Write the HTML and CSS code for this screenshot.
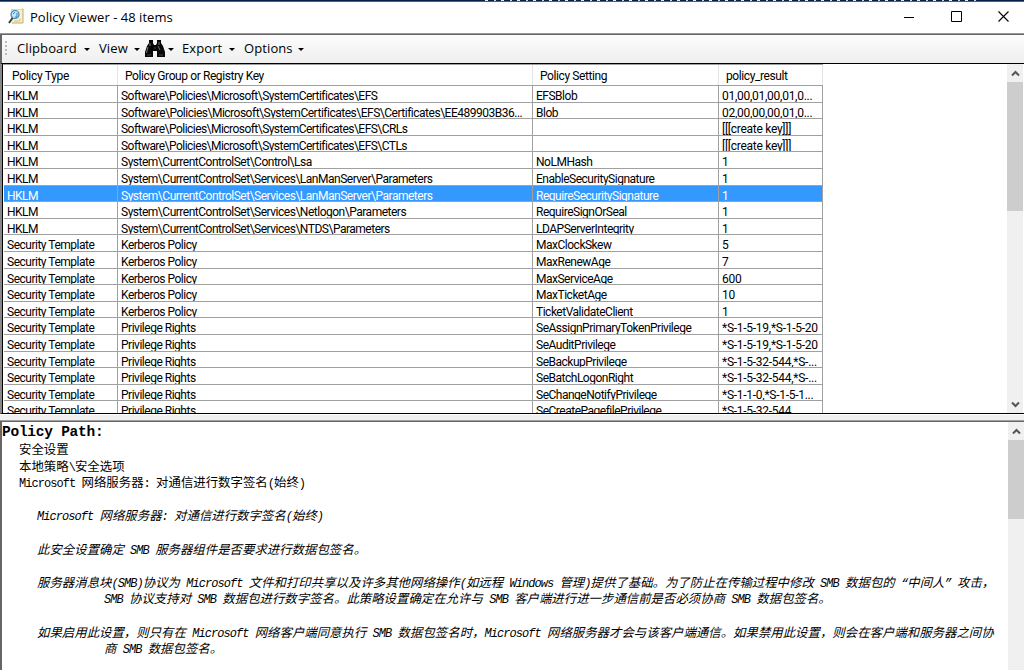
FILE: index.html
```
<!DOCTYPE html>
<html lang="zh-CN">
<head>
<meta charset="utf-8">
<title>Policy Viewer</title>
<link rel="stylesheet" href="styles.css">
</head>
<body>
<div class="window">
  <div class="desktop-edge"></div>
  <header class="titlebar">
    <svg class="app-icon" width="16" height="17" viewBox="0 0 16 17">
      <path d="M3 1h12v14H4V1z" fill="#f7f0cd"/><path d="M14 1h1v14H4" fill="none" stroke="#c3ad65"/>
      <path d="M3.5 1v10M3 1.5h11" stroke="#ded7b5"/><path d="M11 11l2 1M6 13h6" stroke="#d4c57d"/>
      <circle cx="7" cy="6.5" r="4" fill="#bde5fb" stroke="#4d83a6" stroke-width="1.2"/>
      <path d="M5 6l2-2M9 5v4M7 9h2" stroke="#268bd0"/>
      <path d="M4.5 10L1 15" stroke="#333b45" stroke-width="2"/>
    </svg>
    <h1 class="title">Policy Viewer - 48 items</h1>
    <div class="controls">
      <svg width="11" height="12" viewBox="0 0 11 12"><path d="M0 6.5h10" stroke="#000"/></svg>
      <svg width="11" height="12" viewBox="0 0 11 12"><path d="M.5.5h10v10H.5z" fill="none" stroke="#000"/></svg>
      <svg width="11" height="12" viewBox="0 0 11 12"><path d="M.5 0.5l10 10M10.5.5l-10 10" stroke="#000" stroke-width="1.1"/></svg>
    </div>
  </header>
  <main class="client">
    <nav class="toolbar">
      <span class="grip"><i></i><i></i><i></i><i></i></span>
      <span class="menu clip">Clipboard</span><b class="caret"></b>
      <span class="menu view">View</span><b class="caret"></b>
      <svg class="binoculars" width="22" height="19" viewBox="0 0 22 19">
        <path d="M5 1h4v3l1 2h2l1-2V1h4v3l2 3 2 6v5h-8v-6H9v6H1v-5l2-6 2-3z" fill="#080808"/>
        <path d="M4 8L2.5 14M14 7l2 4M6 4v3M15 3v3" stroke="#777" fill="none"/><path d="M3 16h4M15 16h4M10 9h2" stroke="#444"/>
      </svg><b class="caret tight"></b>
      <span class="menu export">Export</span><b class="caret"></b>
      <span class="menu options">Options</span><b class="caret"></b>
    </nav>
    <section class="grid-pane">
      <div class="grid">
        <div class="row head"><span>Policy Type</span><span>Policy Group or Registry Key</span><span>Policy Setting</span><span>policy_result</span></div>
        <div class="row"><span>HKLM</span><span class="sw">Software\Policies\Microsoft\SystemCertificates\EFS</span><span>EFSBlob</span><span>01,00,01,00,01,0...</span></div>
        <div class="row"><span>HKLM</span><span class="sw long">Software\Policies\Microsoft\SystemCertificates\EFS\Certificates\EE489903B36...</span><span>Blob</span><span>02,00,00,00,01,0...</span></div>
        <div class="row"><span>HKLM</span><span class="sw">Software\Policies\Microsoft\SystemCertificates\EFS\CRLs</span><span></span><span>[[[create key]]]</span></div>
        <div class="row"><span>HKLM</span><span class="sw">Software\Policies\Microsoft\SystemCertificates\EFS\CTLs</span><span></span><span>[[[create key]]]</span></div>
        <div class="row"><span>HKLM</span><span>System\CurrentControlSet\Control\Lsa</span><span>NoLMHash</span><span>1</span></div>
        <div class="row"><span>HKLM</span><span>System\CurrentControlSet\Services\LanManServer\Parameters</span><span>EnableSecuritySignature</span><span>1</span></div>
        <div class="row selected"><span>HKLM</span><span>System\CurrentControlSet\Services\LanManServer\Parameters</span><span>RequireSecuritySignature</span><span>1</span></div>
        <div class="row"><span>HKLM</span><span>System\CurrentControlSet\Services\Netlogon\Parameters</span><span>RequireSignOrSeal</span><span>1</span></div>
        <div class="row"><span>HKLM</span><span>System\CurrentControlSet\Services\NTDS\Parameters</span><span>LDAPServerIntegrity</span><span>1</span></div>
        <div class="row"><span>Security Template</span><span>Kerberos Policy</span><span>MaxClockSkew</span><span>5</span></div>
        <div class="row"><span>Security Template</span><span>Kerberos Policy</span><span>MaxRenewAge</span><span>7</span></div>
        <div class="row"><span>Security Template</span><span>Kerberos Policy</span><span>MaxServiceAge</span><span>600</span></div>
        <div class="row"><span>Security Template</span><span>Kerberos Policy</span><span>MaxTicketAge</span><span>10</span></div>
        <div class="row"><span>Security Template</span><span>Kerberos Policy</span><span>TicketValidateClient</span><span>1</span></div>
        <div class="row"><span>Security Template</span><span>Privilege Rights</span><span>SeAssignPrimaryTokenPrivilege</span><span>*S-1-5-19,*S-1-5-20</span></div>
        <div class="row"><span>Security Template</span><span>Privilege Rights</span><span>SeAuditPrivilege</span><span>*S-1-5-19,*S-1-5-20</span></div>
        <div class="row"><span>Security Template</span><span>Privilege Rights</span><span>SeBackupPrivilege</span><span>*S-1-5-32-544,*S-...</span></div>
        <div class="row"><span>Security Template</span><span>Privilege Rights</span><span>SeBatchLogonRight</span><span>*S-1-5-32-544,*S-...</span></div>
        <div class="row"><span>Security Template</span><span>Privilege Rights</span><span>SeChangeNotifyPrivilege</span><span>*S-1-1-0,*S-1-5-1...</span></div>
        <div class="row"><span>Security Template</span><span>Privilege Rights</span><span>SeCreatePagefilePrivilege</span><span>*S-1-5-32-544</span></div>
      </div>
      <div class="scrollbar">
        <svg class="arrow" width="9" height="7" viewBox="0 0 9 7"><path d="M1 5.5l3.5-3.5L8 5.5" fill="none" stroke="#555" stroke-width="2"/></svg>
        <div class="thumb"></div>
        <svg class="arrow down" width="9" height="7" viewBox="0 0 9 7"><path d="M1 1.5L4.5 5 8 1.5" fill="none" stroke="#555" stroke-width="2"/></svg>
      </div>
    </section>
    <div class="splitter"></div>
    <section class="detail-pane">
      <article class="detail">
        <h2>Policy Path:</h2>
        <p class="path">安全设置</p>
        <p class="path">本地策略<i>\</i>安全选项</p>
        <p class="path"><i>Microsoft </i>网络服务器<i>: </i>对通信进行数字签名<i>(</i>始终<i>)</i></p>
        <p></p>
        <p class="body"><i>Microsoft </i>网络服务器<i>: </i>对通信进行数字签名<i>(</i>始终<i>)</i></p>
        <p></p>
        <p class="body">此安全设置确定<i> SMB </i>服务器组件是否要求进行数据包签名。</p>
        <p></p>
        <p class="body">服务器消息块<i>(SMB)</i>协议为<i> Microsoft </i>文件和打印共享以及许多其他网络操作<i>(</i>如远程<i> Windows </i>管理<i>)</i>提供了基础。为了防止在传输过程中修改<i> SMB </i>数据包的<i> “</i>中间人<i>” </i>攻击，</p>
        <p class="body hang"><i>SMB </i>协议支持对<i> SMB </i>数据包进行数字签名。此策略设置确定在允许与<i> SMB </i>客户端进行进一步通信前是否必须协商<i> SMB </i>数据包签名。</p>
        <p></p>
        <p class="body">如果启用此设置，则只有在<i> Microsoft </i>网络客户端同意执行<i> SMB </i>数据包签名时，<i>Microsoft </i>网络服务器才会与该客户端通信。如果禁用此设置，则会在客户端和服务器之间协</p>
        <p class="body hang">商<i> SMB </i>数据包签名。</p>
      </article>
      <div class="scrollbar lower">
        <svg class="arrow" width="9" height="7" viewBox="0 0 9 7"><path d="M1 5.5l3.5-3.5L8 5.5" fill="none" stroke="#555" stroke-width="2"/></svg>
        <div class="thumb"></div>
      </div>
    </section>
  </main>
</div>
</body>
</html>
```
FILE: styles.css
```
* { box-sizing: border-box; }
body { margin: 0; background: #fff; color: #000; }
.window { width: 1024px; height: 670px; display: flex; flex-direction: column; overflow: hidden; }
.desktop-edge { height: 2px; flex: none; border-bottom: 1px solid #1a70b8; background: repeating-linear-gradient(90deg, #06204c 0 5px, #e7ebf0 5px 8px, #06204c 8px 14px, #cbd5e1 14px 16px) 480px 0 / 500px 1px no-repeat #06204c; }
.titlebar { height: 31px; flex: none; display: flex; align-items: center; padding: 0 0 2px 8px; }
.title { margin: 0 0 0 6px; font: 400 13px/20px "Open Sans", "Noto Sans", sans-serif; letter-spacing: 0.03px; }
.controls { margin-left: auto; margin-right: 15px; display: flex; gap: 36px; }
.controls svg { display: block; }
.client { flex: 1; min-height: 0; display: flex; flex-direction: column; border-top: 1px solid #999; }
.toolbar { height: 29px; flex: none; display: flex; align-items: center; border: solid #666; border-width: 1px 0 0 2px; background: linear-gradient(#fdfdfd, #eee); font: 13px/20px "Open Sans", "Noto Sans", sans-serif; padding: 0 0 2px 3px; }
.grip { display: grid; gap: 2px; width: 2px; margin-right: 10px; }
.grip i { width: 2px; height: 2px; background: #bbb; }
.menu { letter-spacing: 0.1px; }
.clip { width: 61px; } .view { width: 29px; } .export { width: 41px; } .options { width: 48px; }
.caret { width: 0; height: 0; border: solid transparent; border-width: 3px 3px 0; border-top-color: #000; margin: 2px 9px 0 6px; }
.binoculars { margin-left: -5px; }
.caret.tight { margin: 2px 8px 0 2px; }
.grid-pane { height: 351px; flex: none; display: flex; justify-content: space-between; overflow: hidden; border-top: 1px solid #000; border-bottom: 1px solid #000; border-left: 2px solid #888; box-shadow: inset 1px 0 #000; padding: 0 1px 0 1px; }
.grid { width: 820px; border-top: 1px solid #a0a0a0; padding-left: 1px; font: 12px/16px Roboto, "Liberation Sans", sans-serif; }
.row { height: 16.6px; display: grid; grid-template-columns: 114px 415px 186px 104px; border-bottom: 1px solid #a0a0a0; letter-spacing: -0.49px; }
.row span { padding-left: 3px; border-right: 1px solid #a0a0a0; white-space: pre; overflow: hidden; line-height: 20px; height: 100%; }
.row .sw { letter-spacing: -0.54px; }
.row .long { letter-spacing: -0.49px; }
.row span:last-child { letter-spacing: -0.27px; }
.row.head { height: 21px; }
.row.head span { padding-left: 7px; line-height: 22px; border-color: #e4e4e4; letter-spacing: -0.4px; }
.row.head span:first-child { padding-left: 8px; letter-spacing: -0.3px; }
.row.selected { background: #3399ff; color: #fff; }
.scrollbar { width: 16px; flex: none; background: #f0f0f0; display: flex; flex-direction: column; align-items: center; }
.arrow { flex: none; margin: 6px 0 5px; }
.thumb { width: 16px; height: 129px; background: #cdcdcd; }
.arrow.down { margin-top: auto; }
.splitter { height: 7px; flex: none; background: linear-gradient(#fff 0 1px, #f0f0f0 1px 6px, #a0a0a0 6px); }
.detail-pane { flex: 1; min-height: 0; display: flex; justify-content: space-between; border: solid #666; border-width: 1px 0 0 2px; }
.detail { padding: 2px 0 0 0; font: 12.42px/16.6px "Noto Sans CJK SC", sans-serif; }
.detail h2 { margin: 0; font: bold 14.5px/17px "Liberation Mono", monospace; letter-spacing: -0.25px; }
.detail p { margin: 0; height: 16.6px; white-space: pre; }
.detail i { font: 12px/1 "Liberation Mono", monospace; letter-spacing: -0.95px; }
.detail .path { padding-left: 17px; }
.detail .body { padding-left: 35px; font-style: italic; }
.detail .body i { font-style: italic; }
.detail .hang { padding-left: 102px; }
.lower .thumb { height: 79px; }
```
